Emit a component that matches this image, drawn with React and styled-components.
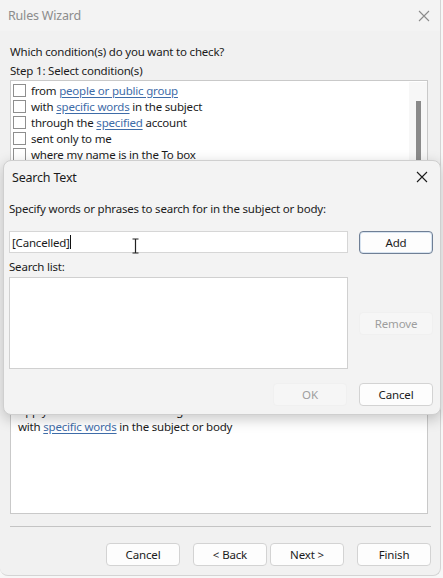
import React from 'react'
import styled, { createGlobalStyle } from 'styled-components'

const Global = createGlobalStyle`
  html, body {
    margin: 0;
    padding: 0;
    background: #f7f7f7;
  }
  body {
    font-family: "Noto Sans", "Open Sans", sans-serif;
    font-size: 11.5px;
    letter-spacing: -0.2px;
    color: #1b1b1b;
  }
`

const Page = styled.div`
  position: relative;
  width: 443px;
  height: 578px;
  overflow: hidden;
`

const Wizard = styled.div`
  width: 441px;
  height: 576px;
  box-sizing: border-box;
  background: #f1f1f1;
  border: 1px solid #d4d4d4;
  border-top: none;
  border-left: none;
  border-bottom-right-radius: 8px;
  border-bottom-left-radius: 8px;
  display: flex;
  flex-direction: column;
`

const TitleBar = styled.div`
  height: 31px;
  display: flex;
  align-items: center;
  justify-content: space-between;
  padding: 0 10px 0 8px;
  background: #f3f3f3;
`

const WinTitle = styled.span`
  font-size: 12.5px;
  color: ${p => (p.$active ? '#1b1b1b' : '#8c8c8c')};
`

const Close = ({ color }) => (
  <svg width="12" height="12" viewBox="0 0 12 12">
    <path d="M1 1L11 11M11 1L1 11" stroke={color} strokeWidth="1.1" fill="none" />
  </svg>
)

const WizBody = styled.div`
  flex: 1;
  display: flex;
  flex-direction: column;
  padding: 11px 9px 0 10px;
`

const Label = styled.div`
  line-height: 19px;
  white-space: nowrap;
`

const ListBox = styled.div`
  height: 300px;
  box-sizing: border-box;
  border: 1px solid #c9c9c9;
  background: #fff;
  display: flex;
  padding: 1px 0 0 2px;
  margin-right: 3px;
`

const Items = styled.div`
  flex: 1;
`

const Scroll = styled.div`
  width: 18px;
  background: #f7f7f7;
  display: flex;
  justify-content: center;
  padding-top: 19px;
`

const Thumb = styled.div`
  width: 5px;
  height: 160px;
  background: #8a8a8a;
`

const Row = styled.div`
  height: 16px;
  display: flex;
  align-items: center;
  gap: 5px;
  white-space: nowrap;
`

const Check = styled.span`
  width: 11px;
  height: 11px;
  border: 1px solid #8e8e8e;
  background: #fff;
  flex: none;
`

const Link = styled.span`
  color: #3e6ca8;
  text-decoration: underline;
  text-underline-offset: 2px;
`

const DescBox = styled.div`
  height: 115px;
  box-sizing: border-box;
  border: 1px solid #c9c9c9;
  background: #fff;
  padding: 3px 7px;
  margin-right: 3px;
  line-height: 16px;
`

const Separator = styled.div`
  height: 1px;
  background: #c4c4c4;
  margin: 12px 0 16px;
`

const ButtonRow = styled.div`
  display: flex;
  justify-content: flex-end;
`

const Button = styled.button`
  width: 74px;
  height: 23px;
  box-sizing: border-box;
  font-family: inherit;
  font-size: 11.5px;
  letter-spacing: -0.15px;
  color: ${p => (p.disabled ? '#9e9e9e' : '#1b1b1b')};
  background: ${p => (p.disabled ? '#f6f6f6' : '#fdfdfd')};
  border: 1px solid ${p => (p.disabled ? '#f0f0f0' : p.$default ? '#6f7f95' : '#d3d3d3')};
  box-shadow: ${p => (p.$default ? 'inset 0 0 0 1px #d7e3f0' : 'none')};
  border-radius: 4px;
  padding: 0;
  margin-left: ${p => p.$gap || 0}px;
`

const Dialog = styled.div`
  position: absolute;
  left: 3px;
  top: 160px;
  width: 438px;
  height: 255px;
  box-sizing: border-box;
  background: #f3f3f3;
  border: 1px solid #cfcfcf;
  border-radius: 8px;
  box-shadow: 0 4px 14px rgba(0, 0, 0, 0.22);
  display: flex;
  flex-direction: column;
`

const DlgTitle = styled(TitleBar)`
  height: 32px;
  padding: 0 12px 0 8px;
  background: transparent;
`

const DlgBody = styled.div`
  padding: 6px 7px 0 5px;
  display: grid;
  grid-template-columns: 339px 1fr;
  column-gap: 11px;
`

const Prompt = styled.div`
  grid-column: 1 / 3;
  line-height: 20px;
  margin-bottom: 12px;
`

const Input = styled.div`
  height: 22px;
  box-sizing: border-box;
  border: 1px solid #d6d6d6;
  background: #fff;
  padding: 0 2px;
  display: flex;
  align-items: center;
  position: relative;
`

const Caret = styled.span`
  display: inline-block;
  width: 1px;
  height: 14px;
  background: #111;
  vertical-align: middle;
`

const Cursor = styled.svg`
  position: absolute;
  left: 122px;
  top: 6px;
`

const ListLabel = styled.div`
  grid-column: 1 / 3;
  line-height: 20px;
  margin-top: 3px;
`

const SearchList = styled.div`
  height: 92px;
  box-sizing: border-box;
  border: 1px solid #d0d0d0;
  background: #fff;
`

const Side = styled.div`
  display: flex;
  align-items: center;
`

const DlgFooter = styled.div`
  grid-column: 1 / 3;
  display: flex;
  justify-content: flex-end;
  margin-top: 14px;
`

export default function App() {
  return (
    <Page>
      <Global />
      <Wizard>
        <TitleBar>
          <WinTitle>Rules Wizard</WinTitle>
          <Close color="#8c8c8c" />
        </TitleBar>
        <WizBody>
          <Label>Which condition(s) do you want to check?</Label>
          <Label>Step 1: Select condition(s)</Label>
          <ListBox>
            <Items>
              <Row><Check /><span>from <Link>people or public group</Link></span></Row>
              <Row><Check /><span>with <Link>specific words</Link> in the subject</span></Row>
              <Row><Check /><span>through the <Link>specified</Link> account</span></Row>
              <Row><Check /><span>sent only to me</span></Row>
              <Row><Check /><span>where my name is in the To box</span></Row>
            </Items>
            <Scroll><Thumb /></Scroll>
          </ListBox>
          <Label>Step 2: Edit the rule description (click an underlined value)</Label>
          <DescBox>
            <div>Apply this rule after the message arrives</div>
            <div>with <Link>specific words</Link> in the subject or body</div>
          </DescBox>
          <Separator />
          <ButtonRow>
            <Button>Cancel</Button>
            <Button $gap={13}>&lt; Back</Button>
            <Button $gap={3}>Next &gt;</Button>
            <Button $gap={13}>Finish</Button>
          </ButtonRow>
        </WizBody>
      </Wizard>

      <Dialog>
        <DlgTitle>
          <WinTitle $active>Search Text</WinTitle>
          <Close color="#1b1b1b" />
        </DlgTitle>
        <DlgBody>
          <Prompt>Specify words or phrases to search for in the subject or body:</Prompt>
          <Input>
            <span>[Cancelled]</span><Caret />
            <Cursor width="7" height="16" viewBox="0 0 7 16">
              <path d="M0.5 1H6.5M3.5 1V15M0.5 15H6.5" stroke="#222" strokeWidth="1.2" fill="none" />
            </Cursor>
          </Input>
          <Button $default>Add</Button>
          <ListLabel>Search list:</ListLabel>
          <SearchList />
          <Side><Button disabled>Remove</Button></Side>
          <DlgFooter>
            <Button disabled>OK</Button>
            <Button $gap={12}>Cancel</Button>
          </DlgFooter>
        </DlgBody>
      </Dialog>
    </Page>
  )
}
